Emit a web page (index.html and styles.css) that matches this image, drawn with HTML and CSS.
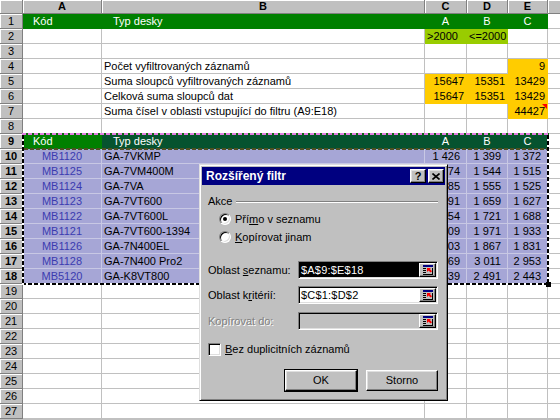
FILE: index.html
```html
<!DOCTYPE html>
<html lang="cs">
<head>
<meta charset="utf-8">
<title>Rozšířený filtr</title>
<link rel="stylesheet" href="styles.css">
</head>
<body>
<div class="screen">
  <div class="sheet">
    <div class="rh ch"></div><div class="rh ch b">A</div><div class="rh ch b">B</div><div class="rh ch b">C</div><div class="rh ch b">D</div><div class="rh ch b">E</div><div class="rh ch"></div>

    <div class="rh">1</div><div class="g ia">Kód</div><div class="g ib">Typ desky</div><div class="g ctr">A</div><div class="g ctr">B</div><div class="g ctr">C</div><div></div>
    <div class="rh">2</div><div></div><div></div><div class="y">&gt;2000</div><div class="y">&lt;=2000</div><div></div><div></div>
    <div class="rh">3</div><div></div><div></div><div></div><div></div><div></div><div></div>
    <div class="rh">4</div><div></div><div>Počet vyfiltrovaných záznamů</div><div></div><div></div><div class="o n">9</div><div></div>
    <div class="rh">5</div><div></div><div>Suma sloupců vyfiltrovaných záznamů</div><div class="o n">15647</div><div class="o n">15351</div><div class="o n">13429</div><div></div>
    <div class="rh">6</div><div></div><div>Celková suma sloupců dat</div><div class="o n">15647</div><div class="o n">15351</div><div class="o n">13429</div><div></div>
    <div class="rh">7</div><div></div><div>Suma čísel v oblasti vstupující do filtru (A9:E18)</div><div></div><div></div><div class="o n cm">44427</div><div></div>
    <div class="rh">8</div><div></div><div></div><div></div><div></div><div></div><div></div>
    <div class="rh b">9</div><div class="g ia">Kód</div><div class="dg ib">Typ desky</div><div class="dg ctr">A</div><div class="dg ctr">B</div><div class="dg ctr">C</div><div></div>

    <div class="rh b">10</div><div class="s code">MB1120</div><div class="s">GA-7VKMP</div><div class="s dn">1 426</div><div class="s dn">1 399</div><div class="s dn">1 372</div><div></div>
    <div class="rh b">11</div><div class="s code">MB1125</div><div class="s">GA-7VM400M</div><div class="s dn">1 574</div><div class="s dn">1 544</div><div class="s dn">1 515</div><div></div>
    <div class="rh b">12</div><div class="s code">MB1124</div><div class="s">GA-7VA</div><div class="s dn">1 585</div><div class="s dn">1 555</div><div class="s dn">1 525</div><div></div>
    <div class="rh b">13</div><div class="s code">MB1123</div><div class="s">GA-7VT600</div><div class="s dn">1 691</div><div class="s dn">1 659</div><div class="s dn">1 627</div><div></div>
    <div class="rh b">14</div><div class="s code">MB1122</div><div class="s">GA-7VT600L</div><div class="s dn">1 754</div><div class="s dn">1 721</div><div class="s dn">1 688</div><div></div>
    <div class="rh b">15</div><div class="s code">MB1121</div><div class="s">GA-7VT600-1394</div><div class="s dn">2 009</div><div class="s dn">1 971</div><div class="s dn">1 933</div><div></div>
    <div class="rh b">16</div><div class="s code">MB1126</div><div class="s">GA-7N400EL</div><div class="s dn">1 903</div><div class="s dn">1 867</div><div class="s dn">1 831</div><div></div>
    <div class="rh b">17</div><div class="s code">MB1128</div><div class="s">GA-7N400 Pro2</div><div class="s dn">3 069</div><div class="s dn">3 011</div><div class="s dn">2 953</div><div></div>
    <div class="rh b">18</div><div class="s code">MB5120</div><div class="s">GA-K8VT800</div><div class="s dn">2 539</div><div class="s dn">2 491</div><div class="s dn">2 443</div><div></div>

    <div class="rh">19</div><div></div><div></div><div></div><div></div><div></div><div></div>
    <div class="rh">20</div><div></div><div></div><div></div><div></div><div></div><div></div>
    <div class="rh">21</div><div></div><div></div><div></div><div></div><div></div><div></div>
    <div class="rh">22</div><div></div><div></div><div></div><div></div><div></div><div></div>
    <div class="rh">23</div><div></div><div></div><div></div><div></div><div></div><div></div>
    <div class="rh">24</div><div></div><div></div><div></div><div></div><div></div><div></div>
    <div class="rh">25</div><div></div><div></div><div></div><div></div><div></div><div></div>
    <div class="rh">26</div><div></div><div></div><div></div><div></div><div></div><div></div>
    <div class="rh">27</div><div></div><div></div><div></div><div></div><div></div><div></div>
  </div>

  <div class="ants">
    <div class="edge et"></div>
    <div class="edge em"></div>
    <div class="edge eb"></div>
    <div class="edge el"></div>
    <div class="edge er"></div>
    <div class="handle"></div>
  </div>

  <div class="dlg">
    <div class="titlebar">
      <span class="tt">Rozšířený filtr</span>
      <span class="tbtn q">?</span>
      <span class="tbtn x"><svg width="8" height="7" viewBox="0 0 8 7"><path d="M0.5 0.5l7 6M7.5 0.5l-7 6" stroke="#000" stroke-width="1.6" fill="none"/></svg></span>
    </div>
    <div class="dbody">
      <div class="grp"><span>Akce</span><i class="etch"></i></div>
      <div class="opt"><span class="radio on"></span><span>Pří<u>m</u>o v seznamu</span></div>
      <div class="opt o2"><span class="radio"></span><span><u>K</u>opírovat jinam</span></div>

      <div class="fld f1"><span class="lbl">Oblast <u>s</u>eznamu:</span><span class="box"><span class="val hl">$A$9:$E$18</span><span class="ref"><svg width="11" height="11" viewBox="0 0 11 11"><rect x="0" y="0" width="10" height="2" fill="#000080"/><path d="M0 3.5h3M0 5.5h3M0 7.5h3M0 9.5h10M9.5 3v7" stroke="#000" stroke-width="1" fill="none"/><path d="M4 3L8 3L6.9 4.1L9 6.2L7.6 7.6L5.5 5.5L4 7Z" fill="#f00"/></svg></span></span></div>
      <div class="fld f2"><span class="lbl">Oblast k<u>r</u>itérií:</span><span class="box"><span class="val">$C$1:$D$2</span><span class="ref"><svg width="11" height="11" viewBox="0 0 11 11"><rect x="0" y="0" width="10" height="2" fill="#000080"/><path d="M0 3.5h3M0 5.5h3M0 7.5h3M0 9.5h10M9.5 3v7" stroke="#000" stroke-width="1" fill="none"/><path d="M4 3L8 3L6.9 4.1L9 6.2L7.6 7.6L5.5 5.5L4 7Z" fill="#f00"/></svg></span></span></div>
      <div class="fld f3"><span class="lbl dis">Kopírovat do:</span><span class="box off"><span class="val"></span><span class="ref"><svg width="11" height="11" viewBox="0 0 11 11"><rect x="0" y="0" width="10" height="2" fill="#000080"/><path d="M0 3.5h3M0 5.5h3M0 7.5h3M0 9.5h10M9.5 3v7" stroke="#000" stroke-width="1" fill="none"/><path d="M4 3L8 3L6.9 4.1L9 6.2L7.6 7.6L5.5 5.5L4 7Z" fill="#f00"/></svg></span></span></div>

      <div class="chk"><span class="cb"></span><span><u>B</u>ez duplicitních záznamů</span></div>

      <div class="btns"><span class="btn def">OK</span><span class="btn">Storno</span></div>
    </div>
  </div>
</div>
</body>
</html>
```
FILE: styles.css
```css
html, body {
  margin: 0;
  padding: 0;
  background: #fff;
}

.screen {
  position: relative;
  width: 560px;
  height: 420px;
  overflow: hidden;
  font-family: "Liberation Sans", Arial, sans-serif;
  font-size: 11px;
}

/* ---------- spreadsheet ---------- */
.sheet {
  display: grid;
  grid-template-columns: 23px 79px 323px 42px 41px 40px 40px;
  grid-template-rows: 14px repeat(27, 15px);
  width: 588px;
  border-bottom: 1px solid #c0c0c0;
}

.sheet > * {
  box-sizing: border-box;
  border-right: 1px solid #c0c0c0;
  border-bottom: 1px solid #c0c0c0;
  padding: 1px 2px 0;
  line-height: 13px;
  white-space: nowrap;
  overflow: hidden;
  color: #000;
}

.sheet > .rh {
  background: #c0c0c0;
  border-right-color: #808080;
  border-bottom-color: #808080;
  box-shadow: inset 1px 1px 0 #fff;
  text-align: center;
  padding: 1px 0 0;
}

.sheet > .ch {
  padding-top: 0;
}

.sheet > .b {
  font-weight: bold;
}

.sheet > .g {
  background: #008000;
  border-color: #008000;
  color: #fff;
}

.sheet > .dg {
  background: #06532f;
  border-color: #06532f;
  color: #fff;
}

.sheet > .y {
  background: #99cc00;
  border-color: #99cc00;
}

.sheet > .o {
  background: #ffcc00;
  border-color: #ffcc00;
}

.sheet > .s {
  background: #a6a6d6;
  border-color: #c8c8e4;
}

.ia { padding-left: 10px !important; }
.ib { padding-left: 11px !important; }
.ctr { text-align: center; }

.n {
  text-align: right;
  padding-right: 2px !important;
}

.dn {
  text-align: right;
  padding-right: 6px !important;
}

.code {
  text-align: center;
  color: #3b3bb0 !important;
}

.cm {
  position: relative;
}

.cm::after {
  content: "";
  position: absolute;
  right: 0;
  top: 0;
  border-style: solid;
  border-width: 0 5px 5px 0;
  border-color: transparent #f00 transparent transparent;
}

/* ---------- marching ants around A9:E18 ---------- */
.ants {
  position: absolute;
  left: 22px;
  top: 133px;
  width: 527px;
  height: 152px;
}

.edge {
  position: absolute;
}

.et {
  left: 0;
  right: 0;
  top: 0;
  height: 2px;
  background: repeating-linear-gradient(90deg, #e27fe2 0 4px, #0a6a0a 4px 6px);
}

.em {
  left: 2px;
  right: 2px;
  top: 15px;
  height: 2px;
  background: repeating-linear-gradient(90deg, #4f4f22 0 4px, transparent 4px 6px);
}

.eb {
  left: 0;
  right: 0;
  bottom: 0;
  height: 2px;
  background: repeating-linear-gradient(90deg, #000 0 4px, #fff 4px 6px);
}

.el {
  left: 0;
  top: 2px;
  bottom: 0;
  width: 2px;
  background: repeating-linear-gradient(180deg, #000 0 4px, #fff 4px 6px);
}

.er {
  right: 0;
  top: 2px;
  bottom: 0;
  width: 2px;
  background: repeating-linear-gradient(180deg, #000 0 4px, #fff 4px 6px);
}

.handle {
  position: absolute;
  left: 524px;
  top: 149px;
  width: 5px;
  height: 5px;
  background: #000;
}

/* ---------- dialog ---------- */
.dlg {
  position: absolute;
  left: 199px;
  top: 164px;
  width: 249px;
  height: 237px;
  box-sizing: border-box;
  background: #c0c0c0;
  border: 1px solid;
  border-color: #dfdfdf #000 #000 #dfdfdf;
  box-shadow: inset 1px 1px 0 #fff, inset -1px -1px 0 #808080;
  padding: 2px;
  color: #000;
}

.titlebar {
  display: flex;
  align-items: center;
  height: 18px;
  background: #000080;
  padding: 0 1px 0 4px;
  gap: 2px;
}

.tt {
  flex: 1;
  color: #fff;
  font-weight: bold;
  font-size: 12px;
}

.tbtn {
  display: flex;
  align-items: center;
  justify-content: center;
  width: 16px;
  height: 14px;
  box-sizing: border-box;
  background: #c0c0c0;
  border: 1px solid;
  border-color: #fff #000 #000 #fff;
  box-shadow: inset -1px -1px 0 #808080, inset 1px 1px 0 #dfdfdf;
  font-weight: bold;
  font-size: 11px;
  line-height: 12px;
}

.dbody {
  padding: 0 7px 0 6px;
  line-height: 13px;
}

.grp {
  display: flex;
  align-items: center;
  margin-top: 10px;
  height: 13px;
}

.etch {
  flex: 1;
  height: 0;
  border-top: 1px solid #808080;
  border-bottom: 1px solid #fff;
  margin: 1px 0 0 4px;
}

.opt {
  display: flex;
  align-items: center;
  gap: 4px;
  height: 16px;
  margin-top: 3px;
  padding-left: 11px;
}

.opt.o2 {
  margin-top: 2px;
}

.radio {
  position: relative;
  width: 12px;
  height: 12px;
  box-sizing: border-box;
  border-radius: 50%;
  border: 1px solid;
  border-color: #808080 #fff #fff #808080;
  box-shadow: inset 1px 1px 0 #000, inset -1px -1px 0 #dfdfdf;
  background: #fff;
}

.radio.on::after {
  content: "";
  position: absolute;
  left: 3px;
  top: 3px;
  width: 4px;
  height: 4px;
  border-radius: 50%;
  background: #000;
}

.fld {
  display: flex;
  align-items: center;
  height: 18px;
}

.f1 { margin-top: 16px; }
.f2 { margin-top: 7px; }
.f3 { margin-top: 8px; }

.lbl {
  width: 90px;
  flex: none;
}

.dis {
  color: #808080;
  text-shadow: 1px 1px 0 #fff;
}

.box {
  display: flex;
  width: 140px;
  height: 18px;
  box-sizing: border-box;
  border: 1px solid;
  border-color: #808080 #fff #fff #808080;
  box-shadow: inset 1px 1px 0 #000, inset -1px -1px 0 #dfdfdf;
  background: #fff;
  padding: 1px;
}

.box.off {
  background: #c0c0c0;
}

.val {
  flex: 1;
  line-height: 14px;
  padding-left: 1px;
  font-size: 11px;
  letter-spacing: 0.2px;
}

.val.hl {
  background: #000;
  color: #fff;
}

.ref {
  display: flex;
  align-items: center;
  justify-content: center;
  width: 17px;
  height: 14px;
  box-sizing: border-box;
  background: #c0c0c0;
  border: 1px solid;
  border-color: #fff #000 #000 #fff;
  box-shadow: inset -1px -1px 0 #808080;
}

.ref svg {
  margin: 1px 0 0 1px;
}

.chk {
  display: flex;
  align-items: center;
  gap: 4px;
  height: 13px;
  margin-top: 13px;
}

.cb {
  width: 13px;
  height: 13px;
  box-sizing: border-box;
  border: 1px solid;
  border-color: #808080 #fff #fff #808080;
  box-shadow: inset 1px 1px 0 #000, inset -1px -1px 0 #dfdfdf;
  background: #fff;
}

.btns {
  display: flex;
  justify-content: flex-end;
  gap: 9px;
  margin-top: 14px;
}

.btn {
  display: flex;
  align-items: center;
  justify-content: center;
  width: 72px;
  height: 21px;
  box-sizing: border-box;
  border: 1px solid;
  border-color: #fff #000 #000 #fff;
  box-shadow: inset -1px -1px 0 #808080, inset 1px 1px 0 #dfdfdf;
}

.btn.def {
  outline: 1px solid #000;
}

u {
  text-decoration: underline;
  text-underline-offset: 1px;
}
```
